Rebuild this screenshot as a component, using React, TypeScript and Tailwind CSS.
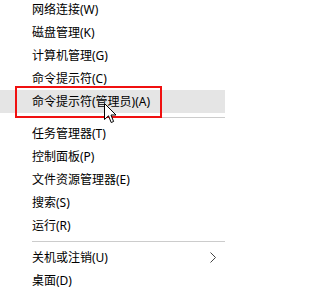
import React from "react";

type Item = { label: string; sub?: boolean; active?: boolean } | "sep";

const items: Item[] = [
  { label: "网络连接(W)" },
  { label: "磁盘管理(K)" },
  { label: "计算机管理(G)" },
  { label: "命令提示符(C)" },
  { label: "命令提示符(管理员)(A)", active: true },
  "sep",
  { label: "任务管理器(T)" },
  { label: "控制面板(P)" },
  { label: "文件资源管理器(E)" },
  { label: "搜索(S)" },
  { label: "运行(R)" },
  "sep",
  { label: "关机或注销(U)", sub: true },
  { label: "桌面(D)" },
];

function Cursor() {
  return (
    <svg
      className="pointer-events-none absolute left-[104px] top-[13px]"
      width="13"
      height="21"
      viewBox="0 0 13 21"
    >
      <path
        d="M0.5 0.5 L0.5 16.5 L4.5 12.8 L7.2 19.5 L9.6 18.5 L7 12 L12 12 Z"
        fill="#fff"
        stroke="#000"
        strokeWidth="1"
        strokeLinejoin="miter"
      />
    </svg>
  );
}

export default function App() {
  return (
    <div
      className="h-[291px] w-[228px] overflow-hidden bg-white text-[12px] text-black"
      style={{ fontFamily: '"Noto Sans", "Noto Sans CJK SC", sans-serif' }}
    >
      <div className="mt-[-2px] pr-[3px]">
        {items.map((it, i) =>
          it === "sep" ? (
            <div key={i} className="py-[4px] pl-[32px]">
              <div className="h-px bg-[#cccccc]" />
            </div>
          ) : (
            <div
              key={i}
              className={`relative flex h-[23px] items-center justify-between pl-[32px] pr-[9px] leading-[23px] ${
                it.active ? "bg-[#e5e5e5]" : ""
              }`}
            >
              <span>{it.label}</span>
              {it.sub && (
                <svg width="6" height="11" viewBox="0 0 6 11">
                  <path d="M0.5 0.5 L5.5 5.5 L0.5 10.5" fill="none" stroke="#444" strokeWidth="1" />
                </svg>
              )}
              {it.active && (
                <>
                  <div className="pointer-events-none absolute left-[15px] top-[-4px] h-[32px] w-[147px] border-2 border-[#f01010]" />
                  <Cursor />
                </>
              )}
            </div>
          )
        )}
      </div>
    </div>
  );
}
